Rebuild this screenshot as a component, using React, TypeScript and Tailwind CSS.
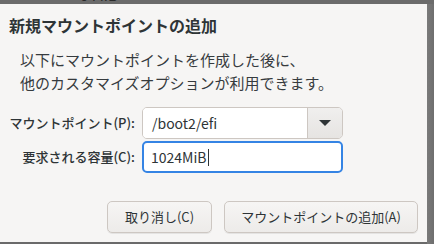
import React from "react";

const font = { fontFamily: '"Noto Sans CJK JP", "Noto Sans", sans-serif' };

export default function App() {
  return (
    <div
      className="w-[434px] h-[244px] bg-[#6a6a6a] flex flex-col overflow-hidden"
      style={font}
    >
      <div className="h-[4px] shrink-0 relative overflow-hidden bg-[#6b6b6b]">
        <span className="absolute left-[80px] top-[-13px] text-[15px] leading-[16px] text-[#2a2a2a]">0 MiB</span>
      </div>
      <div className="flex flex-1 min-h-0">
        <div className="w-[427px] h-[238px] bg-[#f6f5f4] flex flex-col text-[#2e3436]">
          <div className="pt-[11px] pl-[9px] text-[16px] leading-[20px] font-bold text-[#2e3436]">
            新規マウントポイントの追加
          </div>
          <div className="mt-[13px] pl-[20px] text-[15px] leading-[23px] text-[#363b3e]">
            <div>以下にマウントポイントを作成した後に、</div>
            <div>他のカスタマイズオプションが利用できます。</div>
          </div>
          <div className="mt-[13px] flex flex-col gap-[2px]">
            <div className="flex items-center h-[32px]">
              <div className="w-[136px] text-right text-[13px] font-medium pr-[1px] text-[#2e3436]">マウントポイント(P):</div>
              <div className="ml-[6px] flex h-[32px] w-[201px] rounded-[5px] border border-[#cdc7c2] overflow-hidden">
                <div className="flex-1 bg-white flex items-center pl-[9px] text-[14px]">/boot2/efi</div>
                <div className="w-[35px] border-l border-[#cdc7c2] bg-gradient-to-b from-[#f0efee] to-[#e6e4e2] flex items-center justify-center">
                  <svg width="12" height="7" viewBox="0 0 12 7">
                    <path d="M0 0 L12 0 L6 6 Z" fill="#2e3436" />
                  </svg>
                </div>
              </div>
            </div>
            <div className="flex items-center h-[32px]">
              <div className="w-[136px] text-right text-[13px] font-medium pr-[1px] text-[#2e3436]">要求される容量(C):</div>
              <div className="ml-[6px] flex items-center h-[32px] w-[201px] rounded-[5px] border-2 border-[#3584e4] bg-white pl-[7px] text-[14px]">
                <span>1024MiB</span>
                <span className="ml-[1px] w-[1px] h-[17px] bg-[#2e3436]"></span>
              </div>
            </div>
          </div>
          <div className="mt-[28px] flex justify-end gap-[12px] pr-[9px]">
            <button className="h-[32px] w-[105px] rounded-[5px] border border-[#cdc7c2] bg-gradient-to-b from-[#f6f5f4] to-[#edebe9] text-[13px] text-[#2e3436] shadow-[0_1px_0_rgba(0,0,0,0.07)]">
              取り消し(C)
            </button>
            <button className="h-[32px] w-[194px] rounded-[5px] border border-[#cdc7c2] bg-gradient-to-b from-[#f6f5f4] to-[#edebe9] text-[13px] text-[#2e3436] shadow-[0_1px_0_rgba(0,0,0,0.07)]">
              マウントポイントの追加(A)
            </button>
          </div>
        </div>
        <div className="flex-1 bg-gradient-to-r from-[#7a7a7a] to-[#6e6e6e]"></div>
      </div>
    </div>
  );
}
